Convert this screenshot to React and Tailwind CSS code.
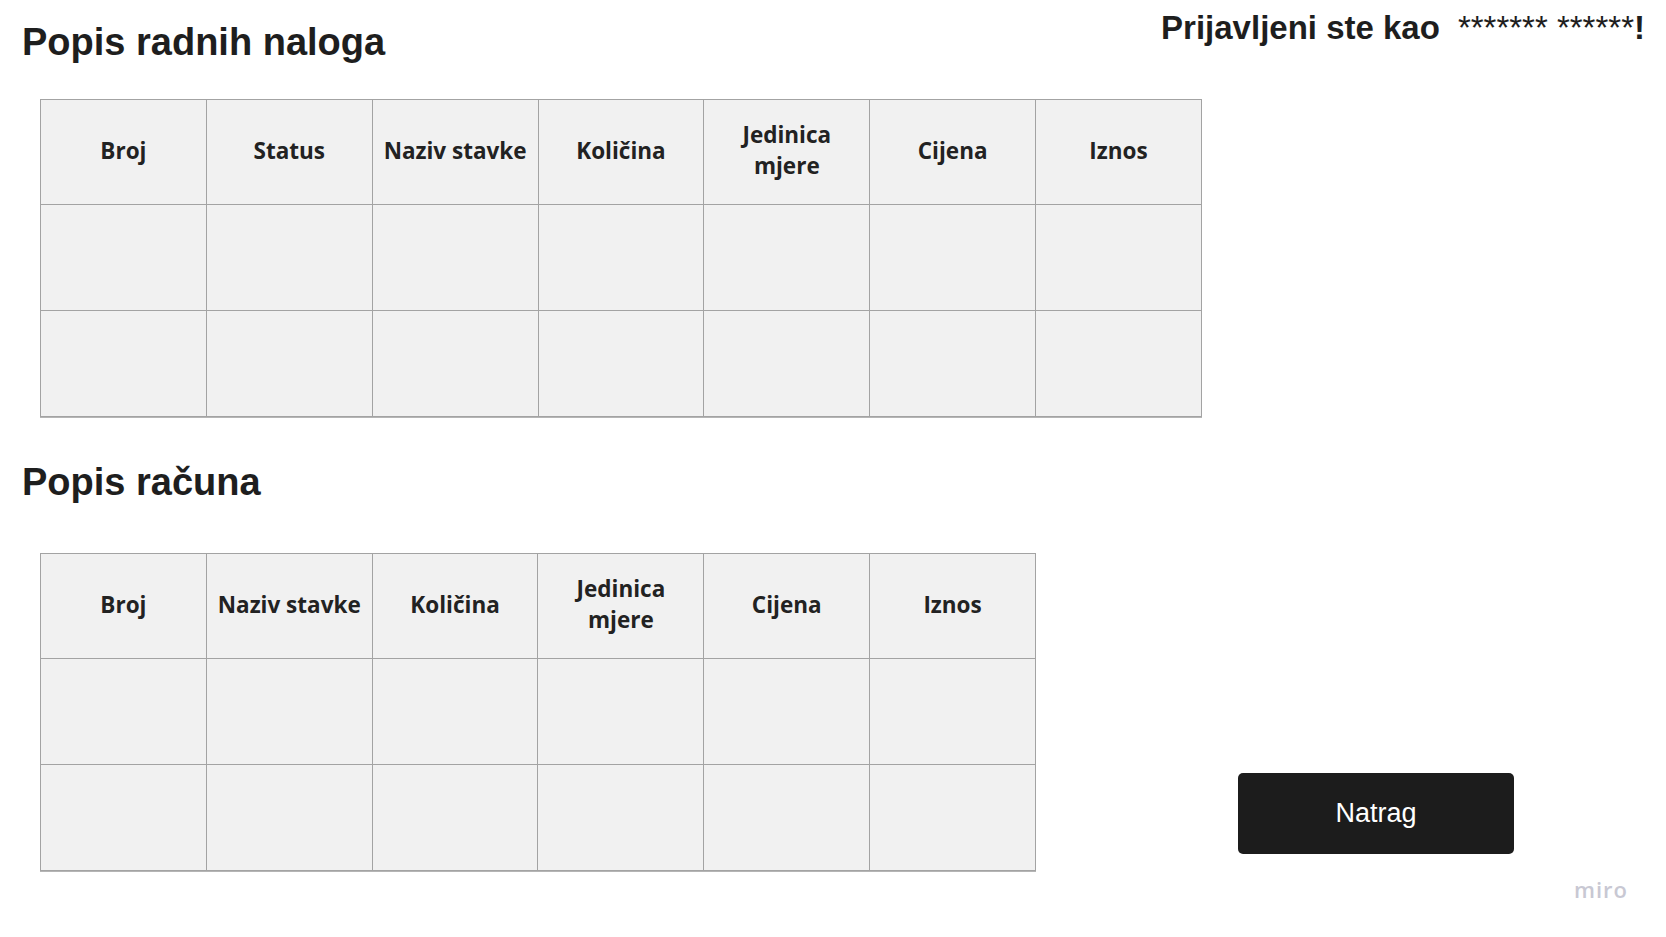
import React from "react";

const cols1 = ["Broj", "Status", "Naziv stavke", "Količina", "Jedinica mjere", "Cijena", "Iznos"];
const cols2 = ["Broj", "Naziv stavke", "Količina", "Jedinica mjere", "Cijena", "Iznos"];

function Grid({ cols }) {
  return (
    <table
      className="table-fixed border-collapse border border-[#9a9a9a] bg-[#f1f1f1] shadow-[0_1px_0_#b5b5b5]"
      style={{ width: cols.length * 166 }}
    >
      <thead>
        <tr className="h-[105px]">
          {cols.map((c, i) => (
            <th
              key={i}
              className="border border-[#a3a3a3] px-[6px] pb-[4px] text-center align-middle font-['Open_Sans',sans-serif] text-[22.5px] font-bold leading-[31px] text-[#222222]"
            >
              {c}
            </th>
          ))}
        </tr>
      </thead>
      <tbody>
        {[0, 1].map((r) => (
          <tr key={r} className="h-[106px]">
            {cols.map((c, i) => (
              <td key={i} className="border border-[#a3a3a3]"></td>
            ))}
          </tr>
        ))}
      </tbody>
    </table>
  );
}

export default function App() {
  return (
    <div className="relative flex h-[937px] w-[1666px] overflow-hidden bg-white font-['Liberation_Sans',Arial,sans-serif] text-[#1e1e1e]">
      <div className="w-[1210px] shrink-0 pl-[22px] pt-[23px]">
        <h1 className="text-[38px] font-bold leading-[38px]">Popis radnih naloga</h1>
        <div className="ml-[18px] mt-[38px]">
          <Grid cols={cols1} />
        </div>
        <h2 className="mt-[46px] text-[38px] font-bold leading-[38px]">Popis računa</h2>
        <div className="ml-[18px] mt-[52px]">
          <Grid cols={cols2} />
        </div>
      </div>
      <div className="flex min-w-0 flex-1 flex-col">
        <div className="mt-[11px] flex items-baseline justify-end whitespace-nowrap pr-[21px] text-[33px] leading-[33px]">
          <span className="shrink-0 font-bold">Prijavljeni ste kao</span>
          <span className="ml-[18px] shrink-0 font-normal">******* ******</span>
          <span className="shrink-0 font-bold">!</span>
        </div>
        <button className="ml-[28px] mt-[729px] flex h-[81px] w-[276px] items-center justify-center rounded-[5px] bg-[#1c1c1c] text-[27px] text-white">
          Natrag
        </button>
      </div>
      <div className="absolute left-[1574px] top-[878px] font-['Open_Sans',sans-serif] text-[22px] font-semibold leading-[22px] tracking-[1px] text-[#c8c8d3]">
        miro
      </div>
    </div>
  );
}
